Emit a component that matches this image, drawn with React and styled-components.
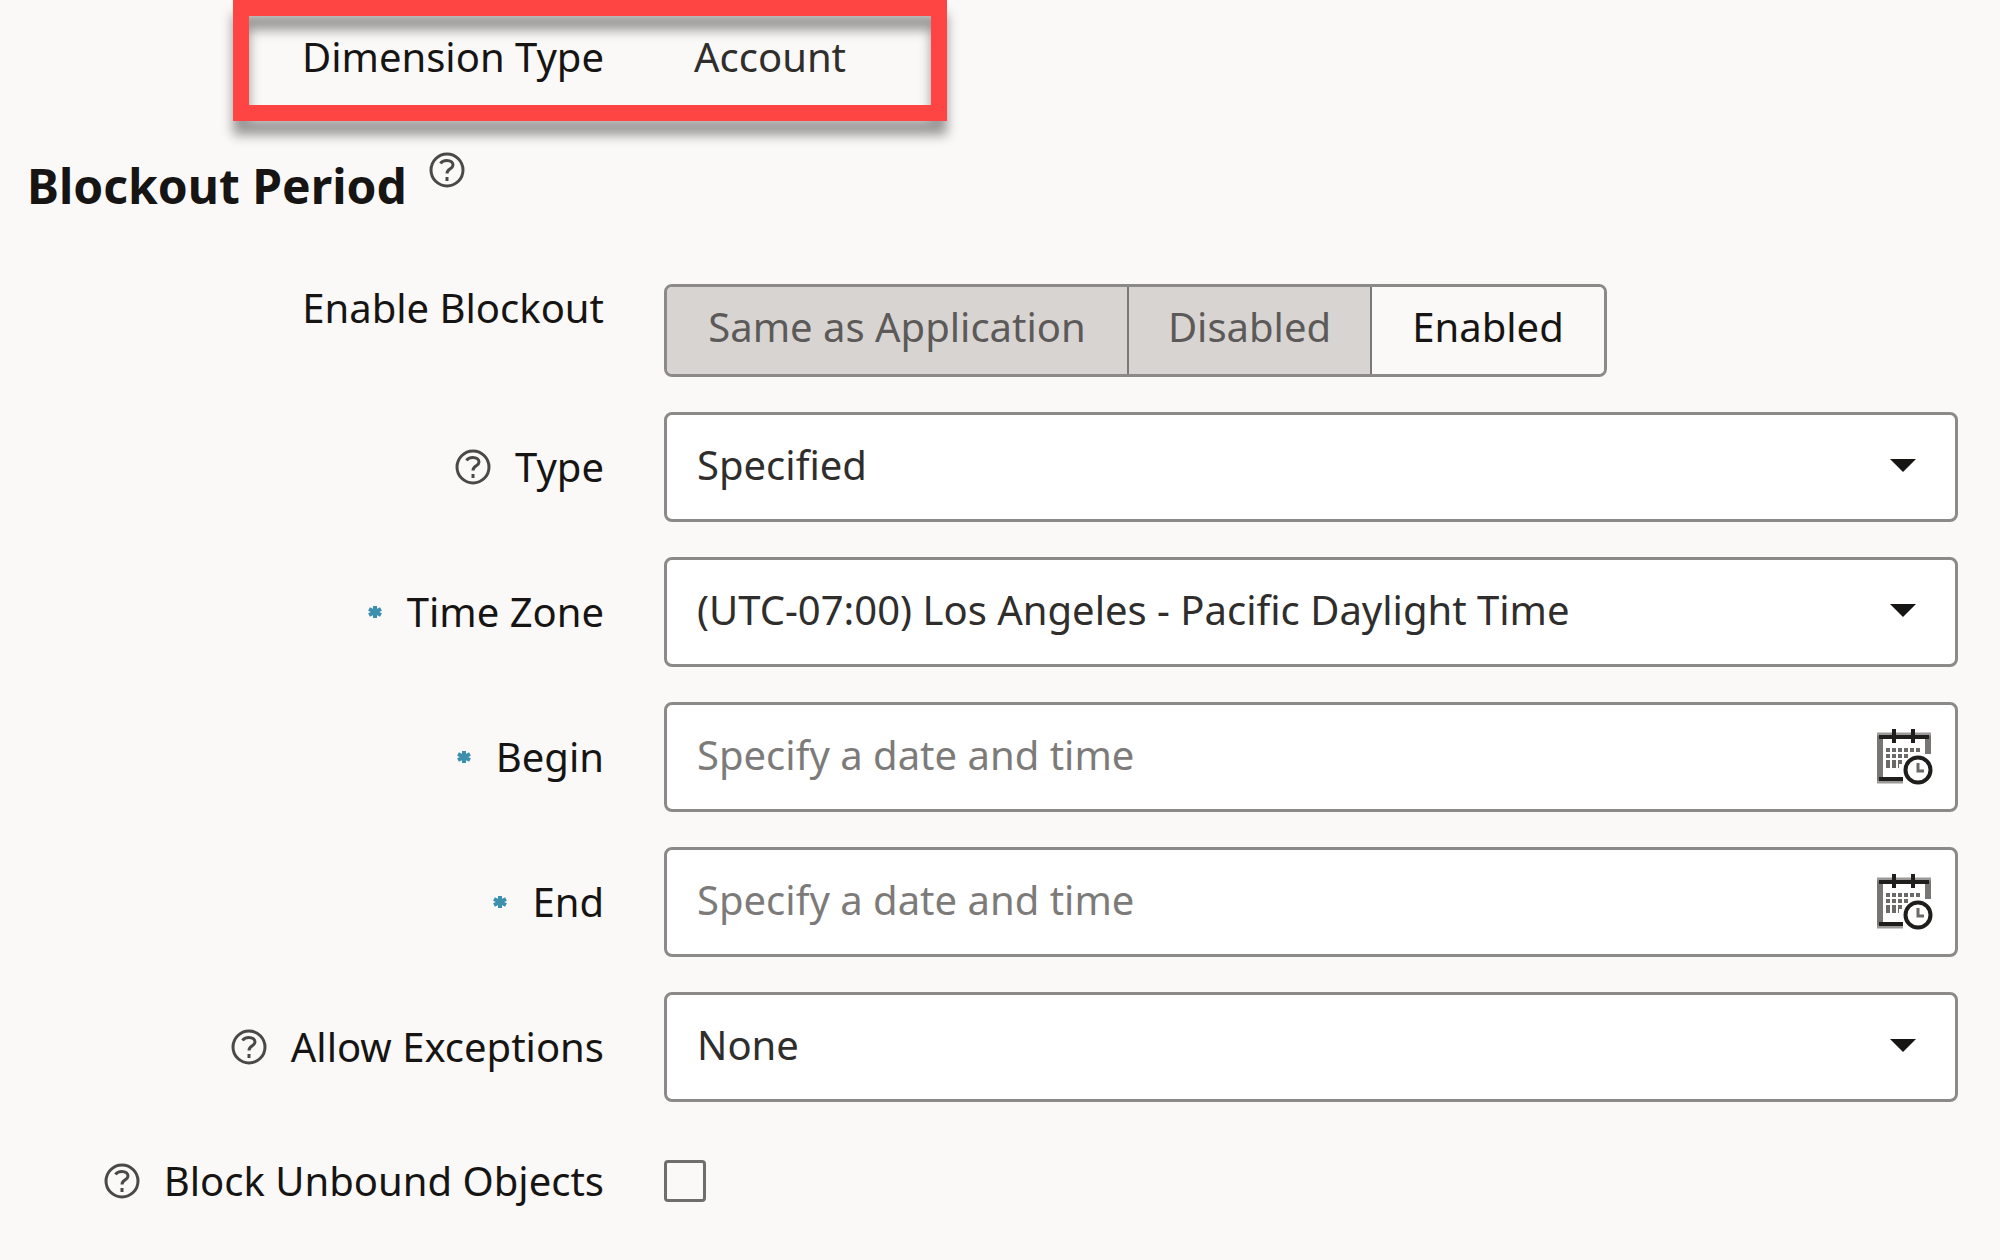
import React, { useState } from "react";
import styled, { createGlobalStyle } from "styled-components";

const HelpIcon = () => (
  <HelpSvg viewBox="0 0 36 36" aria-hidden="true">
    <circle cx="18" cy="18" r="16" />
    <path d="M11.500 11.500c1.300-2 3.600-3 6.300-3 3.800 0 6.200 1.800 6.200 4.500 0 4-6 3.500-6 8.500" />
    <path d="M18 25v4" />
  </HelpSvg>
);

const CalendarIcon = () => (
  <CalendarSvg viewBox="0 0 56 56" aria-hidden="true">
    <path d="M3 4v49M51 4v21" stroke="#777674" strokeWidth="6" />
    <path d="M0 5h54M0 53h26" stroke="#9b9a98" strokeWidth="3" />
    <path d="M2 8h50M2 50h24" strokeWidth="4" />
    <path d="M17 0v14M36 0v14" strokeWidth="4" />
    <path
      d="M9 21h36M9 27h24M9 33h18M9 37h13"
      stroke="#6b6a68"
      strokeWidth="4"
      strokeDasharray="4 2"
    />
    <circle cx="41" cy="41" r="12.500" fill="#fff" strokeWidth="4" />
    <path d="M41 34v8h6" stroke="#6b6a68" strokeWidth="3" />
  </CalendarSvg>
);

const StarIcon = () => (
  <StarSvg viewBox="0 0 16 14" aria-hidden="true">
    <path d="M8 1v12M2 4l12 6M14 4L2 10" />
  </StarSvg>
);

const choices = ["Same as Application", "Disabled", "Enabled"];

const SelectField = ({ id, value }) => (
  <SelectBox>
    <Select id={id} defaultValue={value}>
      <option>{value}</option>
    </Select>
    <Arrow viewBox="0 0 26 13" aria-hidden="true">
      <path d="M0 0h26L13 13z" />
    </Arrow>
  </SelectBox>
);

const DateField = ({ id, name }) => (
  <DateBox>
    <DateInput id={id} type="text" placeholder="Specify a date and time" />
    <IconButton type="button" aria-label={name}>
      <CalendarIcon />
    </IconButton>
  </DateBox>
);

const App = () => {
  const [blockout, setBlockout] = useState("Enabled");
  const [unbound, setUnbound] = useState(false);

  return (
    <Form>
      <GlobalStyle />
      <DimensionRow>
        <Highlight />
        <LabelText>Dimension Type</LabelText>
        <Value>Account</Value>
      </DimensionRow>

      <Heading>
        <Title>Blockout Period</Title>
        <HelpIcon />
      </Heading>

      <Rows>
        <ToggleRow>
          <LabelText id="blockout-label">Enable Blockout</LabelText>
          <Toggle role="group" aria-labelledby="blockout-label">
            {choices.map((choice) => (
              <ToggleButton
                key={choice}
                type="button"
                $active={choice === blockout}
                aria-pressed={choice === blockout}
                onClick={() => setBlockout(choice)}
              >
                {choice}
              </ToggleButton>
            ))}
          </Toggle>
        </ToggleRow>
        <Row>
          <Label htmlFor="type">
            <HelpIcon />
            Type
          </Label>
          <SelectField id="type" value="Specified" />
        </Row>
        <Row>
          <Label htmlFor="zone">
            <StarIcon />
            Time Zone
          </Label>
          <SelectField
            id="zone"
            value="(UTC-07:00) Los Angeles - Pacific Daylight Time"
          />
        </Row>
        <Row>
          <Label htmlFor="begin">
            <StarIcon />
            Begin
          </Label>
          <DateField id="begin" name="Select begin date" />
        </Row>
        <Row>
          <Label htmlFor="end">
            <StarIcon />
            End
          </Label>
          <DateField id="end" name="Select end date" />
        </Row>
        <Row>
          <Label htmlFor="exceptions">
            <HelpIcon />
            Allow Exceptions
          </Label>
          <SelectField id="exceptions" value="None" />
        </Row>
        <CheckRow>
          <Label htmlFor="unbound">
            <HelpIcon />
            Block Unbound Objects
          </Label>
          <Checkbox
            id="unbound"
            type="checkbox"
            checked={unbound}
            onChange={(e) => setUnbound(e.target.checked)}
          />
        </CheckRow>
      </Rows>
    </Form>
  );
};

export default App;

const GlobalStyle = createGlobalStyle`
  * {
    box-sizing: border-box;
  }
  body {
    margin: 0;
    background: #fbf9f8;
    color: #161513;
    font-family: "Noto Sans", "Open Sans", sans-serif;
    font-size: 40px;
    line-height: 56px;
  }
  button,
  input,
  select {
    margin: 0;
    color: inherit;
    font: inherit;
  }
`;

const Form = styled.form`
  padding: 0 42px 40px 0;
`;
const Row = styled.div`
  display: grid;
  grid-template-columns: 604px minmax(0, 1fr);
  column-gap: 60px;
  align-items: center;
`;
const DimensionRow = styled(Row)`
  position: relative;
  height: 121px;
  padding-bottom: 8px;
`;
const ToggleRow = styled(Row)`
  align-items: start;
`;
const CheckRow = styled(Row)`
  padding-top: 16px;
`;
const Highlight = styled.div`
  position: absolute;
  top: 0;
  left: 233px;
  width: 714px;
  height: 121px;
  border: 16px solid #ff4444;
  filter: drop-shadow(0 14px 6px rgba(0, 0, 0, 0.4));
`;
const LabelText = styled.span`
  line-height: 48px;
  text-align: right;
  white-space: nowrap;
`;
const Label = styled.label`
  display: flex;
  align-items: center;
  justify-content: flex-end;
  gap: 24px;
  white-space: nowrap;
`;
const Value = styled.span`
  padding-left: 30px;
  color: #2f2e2c;
`;
const Heading = styled.div`
  display: flex;
  gap: 22px;
  padding: 31px 0 0 27px;
`;
const Title = styled.h2`
  margin: 0;
  font-size: 48px;
  font-weight: 700;
  line-height: 68px;
`;
const Rows = styled.div`
  display: flex;
  flex-direction: column;
  gap: 35px;
  padding-top: 64px;
`;
const Toggle = styled.div`
  display: grid;
  grid-template-columns: 460px 243px 234px;
  justify-self: start;
  height: 93px;
  overflow: hidden;
  border: 3px solid #8b8a88;
  border-radius: 8px;
`;
const ToggleButton = styled.button`
  padding: 0 0 8px;
  border: 0;
  background: ${(props) => (props.$active ? "#fbf9f8" : "#d8d4d2")};
  color: ${(props) => (props.$active ? "#161513" : "#5c5a58")};
  & + & {
    border-left: 2px solid #7a7977;
  }
`;
const SelectBox = styled.div`
  position: relative;
`;
const Select = styled.select`
  display: block;
  appearance: none;
  width: 100%;
  height: 110px;
  padding: 0 90px 4px 30px;
  border: 3px solid #8b8a88;
  border-radius: 8px;
  background: #fff;
  color: #2f2e2c;
`;
const Arrow = styled.svg`
  position: absolute;
  right: 42px;
  top: 47px;
  width: 26px;
  height: 13px;
  fill: #161513;
  pointer-events: none;
`;
const DateBox = styled.div`
  display: flex;
  align-items: center;
  height: 110px;
  padding-right: 22px;
  border: 3px solid #8b8a88;
  border-radius: 8px;
  background: #fff;
`;
const DateInput = styled.input`
  flex: 1;
  min-width: 0;
  padding: 0 0 4px 30px;
  border: 0;
  background: none;
  &::placeholder {
    color: #7d7b79;
    opacity: 1;
  }
`;
const IconButton = styled.button`
  display: flex;
  padding: 0;
  border: 0;
  background: none;
`;
const Checkbox = styled.input`
  appearance: none;
  width: 42px;
  height: 42px;
  border: 3px solid #6f6e6c;
  border-radius: 4px;
  &:checked {
    background: #161513;
  }
`;
const HelpSvg = styled.svg`
  flex: none;
  width: 36px;
  height: 36px;
  fill: none;
  stroke: #4a4947;
  stroke-width: 3;
`;
const CalendarSvg = styled.svg`
  width: 56px;
  height: 56px;
  fill: none;
  stroke: #1f1e1c;
`;
const StarSvg = styled.svg`
  width: 16px;
  height: 14px;
  fill: none;
  stroke: #3d8fae;
  stroke-width: 4;
`;
